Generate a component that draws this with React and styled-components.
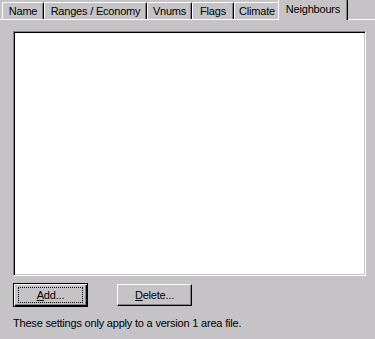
import styled, { createGlobalStyle } from 'styled-components';

const GlobalStyle = createGlobalStyle`
  html, body {
    margin: 0;
    padding: 0;
    background: #c6c3c6;
  }
  body {
    font-family: "Liberation Sans", Arial, sans-serif;
    font-size: 11px;
    letter-spacing: -0.2px;
    color: #000;
  }
`;

const tabs = [
  { label: 'Name', width: 42 },
  { label: 'Ranges / Economy', width: 103 },
  { label: 'Vnums', width: 45 },
  { label: 'Flags', width: 42 },
  { label: 'Climate', width: 46 },
  { label: 'Neighbours', width: 66, active: true },
];

export default function App() {
  return (
    <Dialog>
      <GlobalStyle />
      <TabStrip>
        {tabs.map((t) => (
          <Tab key={t.label} $width={t.width} $active={t.active}>
            {t.label}
          </Tab>
        ))}
      </TabStrip>
      <Panel>
        <ListBox />
        <ButtonRow>
          <Button $default>
            <Focus>
              <u>A</u>dd...
            </Focus>
          </Button>
          <Button>
            <span>
              <u>D</u>elete...
            </span>
          </Button>
        </ButtonRow>
        <Note>These settings only apply to a version 1 area file.</Note>
      </Panel>
    </Dialog>
  );
}

const Dialog = styled.div`
  width: 375px;
  height: 339px;
  overflow: hidden;
  background: #c6c3c6;
`;

const TabStrip = styled.div`
  display: flex;
  align-items: flex-end;
  height: 19px;
  padding-left: 2px;
  position: relative;
  z-index: 1;
`;

const Tab = styled.div`
  box-sizing: border-box;
  flex: none;
  width: ${(p) => (p.$active ? p.$width + 4 : p.$width)}px;
  height: ${(p) => (p.$active ? 21 : 17)}px;
  margin: ${(p) => (p.$active ? '0 -2px -1px -2px' : '0')};
  padding-top: ${(p) => (p.$active ? 3 : 2)}px;
  text-align: center;
  line-height: 13px;
  white-space: nowrap;
  background: #c6c3c6;
  border-top: 1px solid #fff;
  border-left: 1px solid #fff;
  border-right: 1px solid #000;
  border-top-left-radius: 2px;
  border-top-right-radius: 2px;
  box-shadow: inset -1px 0 0 #848284;
`;

const Panel = styled.div`
  border-top: 1px solid #fff;
  padding: 11px 0 0 13px;
  display: flex;
  flex-direction: column;
`;

const ListBox = styled.div`
  box-sizing: border-box;
  width: 353px;
  height: 245px;
  background: #fff;
  border-top: 1px solid #848284;
  border-left: 1px solid #848284;
  border-right: 1px solid #fff;
  border-bottom: 1px solid #fff;
  box-shadow: inset 1px 1px 0 #000, inset -1px -1px 0 #c6c3c6;
`;

const ButtonRow = styled.div`
  display: flex;
  align-items: center;
  gap: 29px;
  margin-top: 7px;
  height: 24px;
`;

const Button = styled.div`
  box-sizing: border-box;
  width: 75px;
  height: ${(p) => (p.$default ? 24 : 22)}px;
  display: flex;
  align-items: center;
  justify-content: center;
  background: #c6c3c6;
  border: 1px solid;
  border-color: ${(p) => (p.$default ? '#000' : '#fff #000 #000 #fff')};
  box-shadow: ${(p) =>
    p.$default
      ? 'inset 1px 1px 0 #fff, inset -1px -1px 0 #000, inset -2px -2px 0 #848284'
      : 'inset -1px -1px 0 #848284'};
  line-height: 13px;

  u {
    text-decoration: underline;
  }
`;

const Focus = styled.span`
  box-sizing: border-box;
  width: 65px;
  height: 16px;
  display: flex;
  align-items: center;
  justify-content: center;
  border: 1px dotted #000;
`;

const Note = styled.div`
  margin-top: 10px;
  line-height: 13px;
  white-space: nowrap;
`;
